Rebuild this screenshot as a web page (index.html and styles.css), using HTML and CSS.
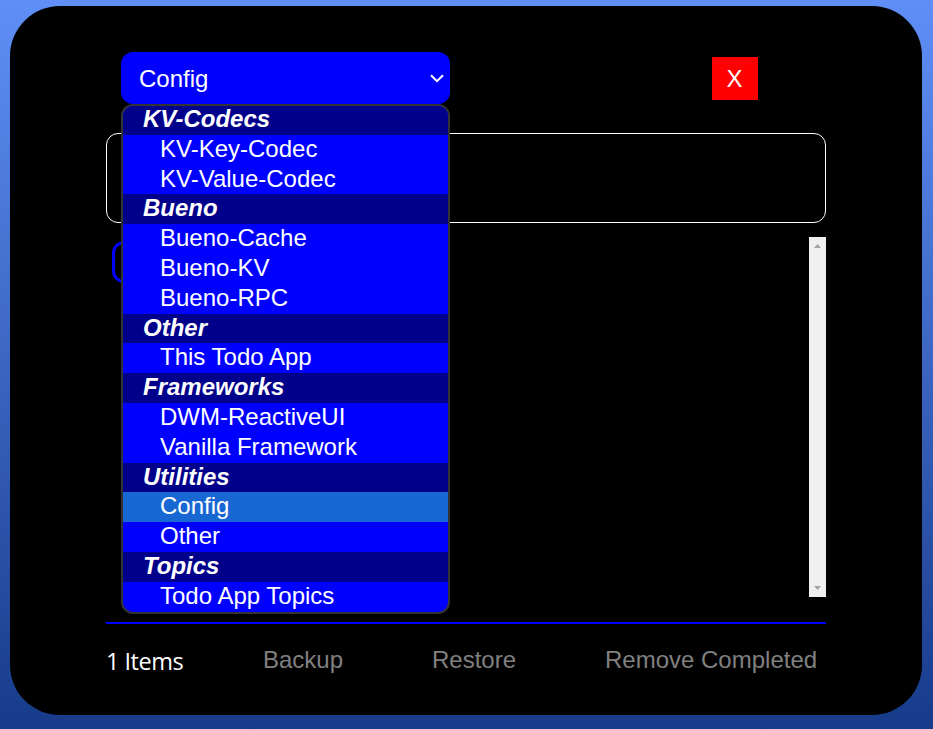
FILE: index.html
```html
<!DOCTYPE html>
<html lang="en">
<head>
<meta charset="utf-8">
<title>Todo</title>
<link rel="stylesheet" href="styles.css">
</head>
<body>
<main class="card">
  <header class="bar">
    <div class="select">
      <span class="value">Config</span>
      <svg class="chevron" viewBox="0 0 14 9" aria-hidden="true"><path d="M1 1.2 7 7.2 13 1.2"/></svg>
      <div class="menu">
        <div class="group first">KV-Codecs</div>
        <div class="option">KV-Key-Codec</div>
        <div class="option">KV-Value-Codec</div>
        <div class="group">Bueno</div>
        <div class="option">Bueno-Cache</div>
        <div class="option">Bueno-KV</div>
        <div class="option">Bueno-RPC</div>
        <div class="group">Other</div>
        <div class="option">This Todo App</div>
        <div class="group">Frameworks</div>
        <div class="option">DWM-ReactiveUI</div>
        <div class="option">Vanilla Framework</div>
        <div class="group">Utilities</div>
        <div class="option selected">Config</div>
        <div class="option">Other</div>
        <div class="group">Topics</div>
        <div class="option">Todo App Topics</div>
      </div>
    </div>
    <button class="close">X</button>
  </header>
  <div class="entry"></div>
  <section class="list">
    <div class="item"></div>
    <div class="scrollbar">
      <svg viewBox="0 0 7 4" aria-hidden="true"><path d="M0 4 3.5 0 7 4z"/></svg>
      <svg viewBox="0 0 7 4" aria-hidden="true"><path d="M0 0h7L3.5 4z"/></svg>
    </div>
  </section>
  <footer class="footer">
    <span class="count">1 Items</span>
    <span class="action backup">Backup</span>
    <span class="action restore">Restore</span>
    <span class="action remove">Remove Completed</span>
  </footer>
</main>
</body>
</html>
```

FILE: styles.css
```css
* { box-sizing: border-box; }

body {
  margin: 0;
  height: 729px;
  padding: 6px 11px 14px 10px;
  overflow: hidden;
  background: linear-gradient(180deg, #5f8ff7, #173b8a);
  font: 24px/30px "Liberation Sans", Arial, sans-serif;
  color: #fff;
}

.card {
  height: 709px;
  padding: 46px 96px 0;
  border-radius: 50px;
  background: #000;
}

.bar {
  display: flex;
  justify-content: space-between;
  align-items: flex-start;
  padding: 0 68px 0 15px;
  height: 81px;
}

.select {
  position: relative;
  display: flex;
  align-items: center;
  justify-content: space-between;
  width: 329px;
  height: 52px;
  padding: 0 6px 0 18px;
  border-radius: 12px;
  background: #00f;
}

.value { padding-top: 2px; }

.chevron {
  width: 14px;
  height: 9px;
  fill: none;
  stroke: #fff;
  stroke-width: 2;
}

.menu {
  position: absolute;
  z-index: 1;
  top: 52px;
  left: 0;
  width: 329px;
  height: 510px;
  border: 2px solid #333;
  border-radius: 12px;
  overflow: hidden;
  background: #00f;
}

.group,
.option {
  height: 29.8px;
  line-height: 27.8px;
}

.group {
  padding-left: 20px;
  background: #00008b;
  font-weight: bold;
  font-style: italic;
}

.first {
  height: 28.8px;
  line-height: 25px;
}

.option { padding-left: 37px; }

.selected { background: #1967d2; }

.close {
  width: 46px;
  height: 43px;
  margin-top: 5px;
  padding: 0 1px 0 0;
  border: 0;
  background: #f00;
  color: #fff;
  font: inherit;
}

.entry {
  height: 90px;
  border: 1px solid #fff;
  border-radius: 12px;
}

.list {
  display: flex;
  justify-content: space-between;
  height: 360px;
  margin-top: 14px;
}

.item {
  width: 60px;
  height: 42px;
  margin: 4px 0 0 6px;
  border: 3px solid #00f;
  border-radius: 12px;
}

.scrollbar {
  display: flex;
  flex-direction: column;
  justify-content: space-between;
  align-items: center;
  width: 17px;
  padding: 7px 0;
  background: #f0f0f0;
}

.scrollbar svg {
  width: 7px;
  height: 4px;
  fill: #a3a3a3;
}

.footer {
  display: grid;
  grid-template-columns: 157px 169px 173px 1fr;
  margin-top: 25px;
  padding-top: 21px;
  border-top: 2px solid #00f;
  white-space: nowrap;
}

.count {
  padding-top: 1px;
  font-family: "Open Sans", "Noto Sans", sans-serif;
  font-size: 23.5px;
  letter-spacing: -0.5px;
}

.action { color: #808080; }
```
